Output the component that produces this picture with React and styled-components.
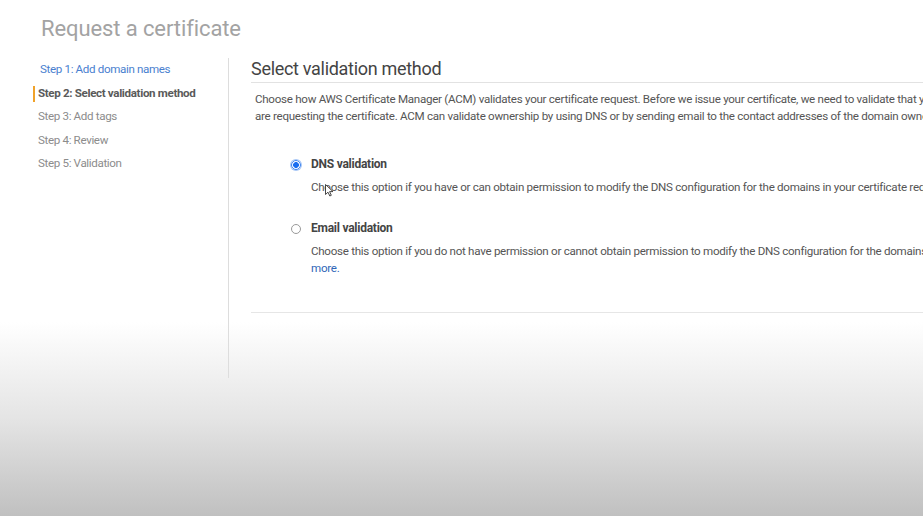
import styled, { createGlobalStyle } from "styled-components";

const GlobalStyle = createGlobalStyle`
  html, body {
    margin: 0;
    padding: 0;
  }
  body {
    min-height: 516px;
    background: linear-gradient(to bottom, #ffffff 0px, #ffffff 322px, #e4e4e4 420px, #c0c0c0 516px);
    font-family: Roboto, "Liberation Sans", Arial, sans-serif;
    overflow: hidden;
  }
`;

const Page = styled.div`
  width: 923px;
  height: 516px;
  overflow: hidden;
`;

const Title = styled.h1`
  margin: 0;
  padding: 14px 0 0 41px;
  font-size: 22px;
  line-height: 30px;
  font-weight: 400;
  color: #a3a3a3;
  letter-spacing: -0.1px;
`;

const Body = styled.div`
  display: flex;
  margin-top: 14px;
`;

const Sidebar = styled.nav`
  width: 229px;
  height: 320px;
  flex-shrink: 0;
  border-right: 1px solid #dddddd;
  box-sizing: border-box;
`;

const NavItem = styled.div`
  position: relative;
  height: 23.5px;
  line-height: 23.5px;
  padding-left: ${(p) => p.$indent}px;
  font-size: 11.6px;
  letter-spacing: -0.35px;
  font-weight: ${(p) => (p.$active ? 700 : 400)};
  color: ${(p) => (p.$done ? "#4a7fcf" : p.$active ? "#5a5a5a" : "#8c8c8c")};

  &::before {
    content: "";
    display: ${(p) => (p.$active ? "block" : "none")};
    position: absolute;
    left: 33px;
    top: 4px;
    width: 2px;
    height: 16px;
    background: #f0a22a;
  }
`;

const Main = styled.main`
  width: 1000px;
  flex-shrink: 0;
  padding-left: 22px;
`;

const SectionHeader = styled.h2`
  margin: 0;
  font-size: 18px;
  line-height: 22px;
  font-weight: 400;
  color: #444444;
  letter-spacing: -0.3px;
  padding-bottom: 2px;
  border-bottom: 1px solid #e2e2e2;
`;

const Intro = styled.p`
  margin: 8px 0 0 4px;
  font-size: 11.6px;
  line-height: 17px;
  color: #555555;
  letter-spacing: -0.28px;
  white-space: nowrap;
`;

const Line = styled.span`
  display: block;
`;

const Options = styled.div`
  padding: 31px 0 35px 39px;
  border-bottom: 1px solid #e6e6e6;
  display: flex;
  flex-direction: column;
  gap: 24px;
`;

const Option = styled.div`
  display: grid;
  grid-template-columns: 10px 1fr;
  column-gap: 11px;
  row-gap: 6px;
  align-items: center;
`;

const Radio = styled.span`
  width: 10px;
  height: 10px;
  margin-left: 1px;
  box-sizing: border-box;
  border-radius: 50%;
  border: 1px solid ${(p) => (p.$checked ? "#3b82f0" : "#9a9a9a")};
  background: ${(p) => (p.$checked ? "radial-gradient(circle, #1a6ef0 0 2.6px, #ffffff 3.2px)" : "#ffffff")};
  box-shadow: ${(p) => (p.$checked ? "0 0 0 1px #a9c8f6" : "none")};
`;

const Label = styled.span`
  font-size: 12px;
  line-height: 17px;
  font-weight: 700;
  color: #444444;
  letter-spacing: -0.25px;
`;

const Desc = styled.div`
  grid-column: 2;
  font-size: 11.6px;
  line-height: 17px;
  color: #555555;
  letter-spacing: -0.28px;
  white-space: nowrap;
`;

const Link = styled.a`
  color: #2f67b8;
  text-decoration: none;
`;

const Cursor = styled.svg`
  position: absolute;
  left: 325px;
  top: 184px;
`;

const steps = [
  { label: "Step 1: Add domain names", done: true, indent: 40 },
  { label: "Step 2: Select validation method", active: true, indent: 38 },
  { label: "Step 3: Add tags", indent: 38 },
  { label: "Step 4: Review", indent: 38 },
  { label: "Step 5: Validation", indent: 38 },
];

export default function App() {
  return (
    <Page>
      <GlobalStyle />
      <Title>Request a certificate</Title>
      <Body>
        <Sidebar>
          {steps.map((s) => (
            <NavItem key={s.label} $done={s.done} $active={s.active} $indent={s.indent}>
              {s.label}
            </NavItem>
          ))}
        </Sidebar>
        <Main>
          <SectionHeader>Select validation method</SectionHeader>
          <Intro>
            <Line>
              Choose how AWS Certificate Manager (ACM) validates your certificate request. Before we issue your certificate, we need to validate that you own or control the domains for which you
            </Line>
            <Line>
              are requesting the certificate. ACM can validate ownership by using DNS or by sending email to the contact addresses of the domain owner.
            </Line>
          </Intro>
          <Options>
            <Option>
              <Radio $checked />
              <Label>DNS validation</Label>
              <Desc>
                Choose this option if you have or can obtain permission to modify the DNS configuration for the domains in your certificate request.
              </Desc>
            </Option>
            <Option>
              <Radio />
              <Label>Email validation</Label>
              <Desc>
                <Line>
                  Choose this option if you do not have permission or cannot obtain permission to modify the DNS configuration for the domains in your certificate request. <Link>Learn</Link>
                </Line>
                <Line>
                  <Link>more.</Link>
                </Line>
              </Desc>
            </Option>
          </Options>
        </Main>
      </Body>
      <Cursor width="9" height="13" viewBox="0 0 9 13">
        <path d="M0.5 0.5 L0.5 10.5 L3 8.2 L4.8 12 L6.3 11.3 L4.6 7.6 L8 7.6 Z" fill="#ffffff" stroke="#333333" strokeWidth="0.9" strokeLinejoin="round" />
      </Cursor>
    </Page>
  );
}
